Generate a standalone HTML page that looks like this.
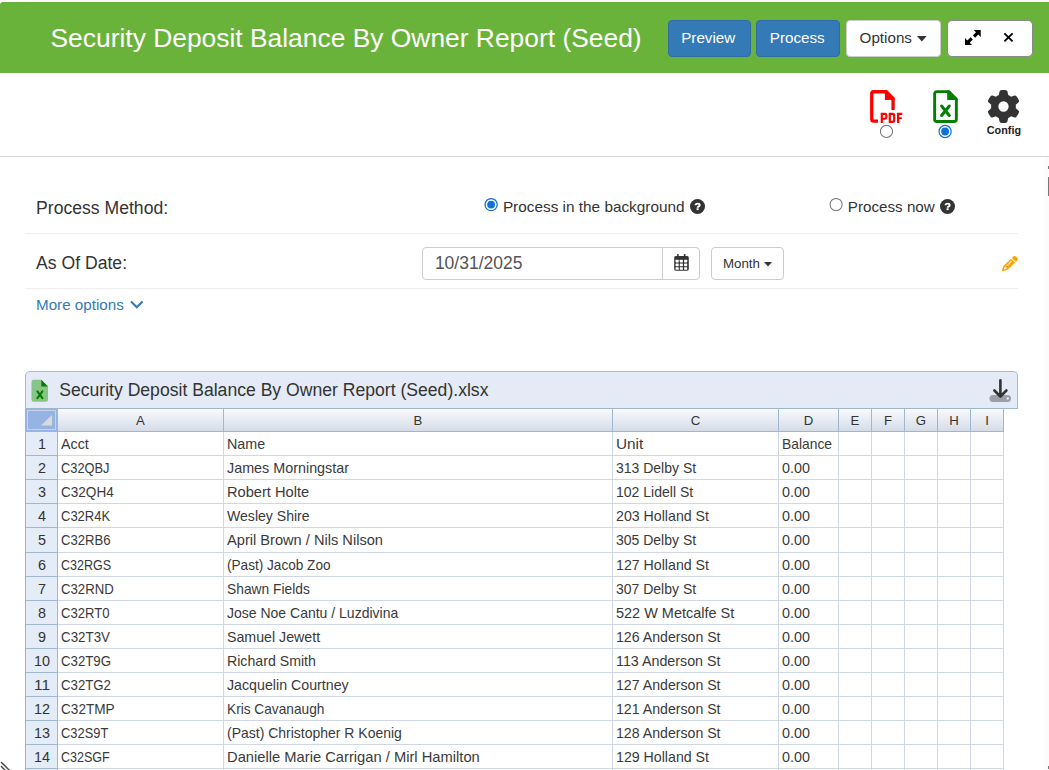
<!DOCTYPE html>
<html><head><meta charset="utf-8">
<style>
html,body{margin:0;padding:0;}
body{width:1049px;height:770px;overflow:hidden;position:relative;background:#fff;font-family:"Liberation Sans", sans-serif;}
.t{position:absolute;white-space:nowrap;line-height:1;}
svg{position:absolute;overflow:visible;}
</style></head><body>
<div style="position:absolute;left:0px;top:2px;width:1049px;height:71px;background:#6ab33b;border-top-left-radius:3px;"></div>
<div class="t" style="left:50.5px;top:24.85px;font-size:26.4px;color:#fff;font-weight:normal;">Security Deposit Balance By Owner Report (Seed)</div>
<div style="position:absolute;left:668px;top:20px;width:81px;height:35px;background:#337ab7;border:1px solid #2e6da4;border-radius:4px;"></div>
<div class="t" style="left:681.2px;top:30.43px;font-size:15.2px;color:#fff;font-weight:normal;">Preview</div>
<div style="position:absolute;left:756px;top:20px;width:82px;height:35px;background:#337ab7;border:1px solid #2e6da4;border-radius:4px;"></div>
<div class="t" style="left:769.8px;top:30.43px;font-size:15.2px;color:#fff;font-weight:normal;">Process</div>
<div style="position:absolute;left:846px;top:20px;width:93px;height:35px;background:#fff;border:1px solid #ccc;border-radius:4px;"></div>
<div class="t" style="left:859.6px;top:30.43px;font-size:15.2px;color:#333;font-weight:normal;">Options</div>
<svg style="left:917.3px;top:35.5px" width="10" height="6"><path d="M0 0H9.6L4.8 5.4Z" fill="#333"/></svg>
<div style="position:absolute;left:947px;top:20px;width:84px;height:35px;background:#fff;border:1px solid #8a8a8a;border-radius:5px;"></div>
<svg style="left:0;top:0" width="1049" height="770" viewBox="0 0 1049 770">
<path d="M973.6 29.9H980.7V37L978.3 34.6L975.2 37.7L972.9 35.4L976 32.3Z" fill="#000"/>
<path d="M972.1 45.1H965V38L967.4 40.4L970.5 37.3L972.8 39.6L969.7 42.7Z" fill="#000"/>
<path d="M1004.4 33.4L1012.6 41.4M1012.6 33.4L1004.4 41.4" stroke="#000" stroke-width="1.9"/>
</svg>
<div style="position:absolute;left:0px;top:156px;width:1049px;height:1px;background:#d4d4d4;"></div>
<svg style="left:0;top:0" width="1049" height="770" viewBox="0 0 1049 770">
<path d="M878 121.15H873.7Q871.75 121.15 871.75 119.2V93.7Q871.75 91.75 873.7 91.75H886.3L893.05 98.5V109.9" fill="none" stroke="#f00" stroke-width="3.3"/>
<path d="M884.9 90.1H886.5L894.7 98.3V99.9H884.9Z" fill="#f00"/>
<path fill-rule="evenodd" fill="#f00" d="M880.7 112.7H885Q887.4 112.7 887.4 115.1V117.3Q887.4 119.7 885 119.7H882.9V122.9H880.7ZM882.9 114.9H884.6Q885.3 114.9 885.3 115.6V117Q885.3 117.7 884.6 117.7H882.9Z
M888.7 112.7H892.7Q895.2 112.7 895.2 115.2V120.4Q895.2 122.9 892.7 122.9H888.7ZM890.9 114.9H892.4Q893.1 114.9 893.1 115.6V120Q893.1 120.7 892.4 120.7H890.9Z
M897 112.7H902.3V114.9H899.3V117.2H901.9V119.1H899.3V122.9H897Z"/>
</svg>
<svg style="left:0;top:0" width="1049" height="770" viewBox="0 0 1049 770"><circle cx="886.5" cy="131.4" r="6.05" fill="#fff" stroke="#767676" stroke-width="1.05"/></svg>
<svg style="left:0;top:0" width="1049" height="770" viewBox="0 0 1049 770">
<path d="M948.6 91.6H937Q934.65 91.6 934.65 93.95V119.2Q934.65 121.55 937 121.55H954Q956.35 121.55 956.35 119.2V99.4Z" fill="none" stroke="#008000" stroke-width="2.9" stroke-linejoin="round"/>
<path d="M947.2 90.2H949.2L957.8 98.8V100H947.2Z" fill="#008000"/>
<path d="M941.6 106L949.3 115.5M949.3 106L941.6 115.5" stroke="#008000" stroke-width="3" stroke-linecap="round"/>
</svg>
<svg style="left:0;top:0" width="1049" height="770" viewBox="0 0 1049 770"><circle cx="945.1" cy="131.5" r="6.1" fill="#fff" stroke="#0f70d7" stroke-width="1.25"/><circle cx="945.1" cy="131.5" r="3.9" fill="#0f70d7"/></svg>
<svg style="left:987px;top:90px" width="33" height="33" viewBox="0 0 512 512">
<path fill="#333" d="M495.9 166.6c3.2 8.7 .5 18.4-6.4 24.6l-43.3 39.4c1.1 8.3 1.7 16.8 1.7 25.4s-.6 17.1-1.7 25.4l43.3 39.4c6.9 6.2 9.6 15.9 6.4 24.6c-4.4 11.9-9.7 23.3-15.8 34.3l-4.7 8.1c-6.6 11-14 21.4-22.1 31.2c-5.900 7.2-15.7 9.6-24.5 6.8l-55.7-17.700c-13.4 10.3-28.2 18.9-44 25.4l-12.5 57.1c-2 9.1-9 16.3-18.2 17.8c-13.8 2.3-28 3.5-42.5 3.5s-28.7-1.2-42.5-3.5c-9.2-1.5-16.2-8.7-18.2-17.8l-12.5-57.1c-15.8-6.5-30.6-15.1-44-25.4L83.1 425.9c-8.8 2.8-18.6 .3-24.5-6.8c-8.1-9.8-15.5-20.2-22.1-31.2l-4.7-8.1c-6.1-11-11.4-22.4-15.8-34.3c-3.2-8.7-.5-18.4 6.4-24.6l43.3-39.4C64.6 273.1 64 264.6 64 256s.6-17.1 1.7-25.4L22.4 191.200c-6.9-6.2-9.6-15.900-6.4-24.6c4.4-11.9 9.7-23.3 15.8-34.3l4.7-8.1c6.6-11 14-21.4 22.1-31.2c5.9-7.2 15.7-9.6 24.5-6.8l55.7 17.7c13.4-10.3 28.2-18.9 44-25.4l12.5-57.1c2-9.1 9-16.3 18.2-17.8C227.3 1.2 241.5 0 256 0s28.7 1.2 42.5 3.5c9.2 1.5 16.2 8.7 18.2 17.8l12.5 57.1c15.8 6.5 30.6 15.1 44 25.4l55.7-17.7c8.8-2.8 18.6-.3 24.5 6.8c8.1 9.8 15.5 20.2 22.1 31.2l4.7 8.1c6.1 11 11.4 22.4 15.8 34.3zM256 336a80 80 0 1 0 0-160 80 80 0 1 0 0 160z"/>
</svg>
<div class="t" style="left:986.8px;top:125.06px;font-size:10.8px;color:#222;font-weight:bold;">Config</div>
<div style="position:absolute;left:1045px;top:157px;width:4px;height:613px;background:#fbfbfb;"></div>
<div style="position:absolute;left:1048px;top:766px;width:1px;height:3px;background:#777;"></div>
<div style="position:absolute;left:1048px;top:166px;width:1px;height:3px;background:#777;"></div>
<div style="position:absolute;left:1048px;top:177px;width:1px;height:19px;background:#777;"></div>
<div class="t" style="left:36.1px;top:199.50px;font-size:17.6px;color:#333;font-weight:normal;">Process Method:</div>
<svg style="left:0;top:0" width="1049" height="770" viewBox="0 0 1049 770"><circle cx="491.1" cy="204.6" r="6.1" fill="#fff" stroke="#0f70d7" stroke-width="1.25"/><circle cx="491.1" cy="204.6" r="3.9" fill="#0f70d7"/></svg>
<div class="t" style="left:502.9px;top:198.61px;font-size:15.35px;color:#333;font-weight:normal;">Process in the background</div>
<svg style="left:689.5px;top:198.8px" width="15" height="15" viewBox="0 0 15 15"><circle cx="7.5" cy="7.5" r="7.5" fill="#333"/><path d="M5.5 6.2Q5.5 4.6 7.6 4.6Q9.7 4.6 9.7 6.1Q9.7 7.1 8.6 7.6Q7.6 8.05 7.6 8.7" fill="none" stroke="#fff" stroke-width="1.9"/><rect x="6.55" y="9.3" width="2.1" height="1.8" fill="#fff"/></svg>
<svg style="left:0;top:0" width="1049" height="770" viewBox="0 0 1049 770"><circle cx="836.1" cy="204.5" r="6.05" fill="#fff" stroke="#767676" stroke-width="1.05"/></svg>
<div class="t" style="left:847.8px;top:198.73px;font-size:15.2px;color:#333;font-weight:normal;">Process now</div>
<svg style="left:940.2px;top:198.6px" width="15" height="15" viewBox="0 0 15 15"><circle cx="7.5" cy="7.5" r="7.5" fill="#333"/><path d="M5.5 6.2Q5.5 4.6 7.6 4.6Q9.7 4.6 9.7 6.1Q9.7 7.1 8.6 7.6Q7.6 8.05 7.6 8.7" fill="none" stroke="#fff" stroke-width="1.9"/><rect x="6.55" y="9.3" width="2.1" height="1.8" fill="#fff"/></svg>
<div style="position:absolute;left:25px;top:233px;width:993px;height:1px;background:#eee;"></div>
<div class="t" style="left:36.1px;top:254.90px;font-size:17.6px;color:#333;font-weight:normal;">As Of Date:</div>
<div style="position:absolute;left:422px;top:247px;width:276px;height:31px;border:1px solid #ccc;border-radius:4px;background:#fff;"></div>
<div style="position:absolute;left:662px;top:248px;width:1px;height:31px;background:#ccc;"></div>
<div class="t" style="left:434.9px;top:254.59px;font-size:17.5px;color:#555;font-weight:normal;">10/31/2025</div>
<svg style="left:674px;top:254px" width="15" height="17" viewBox="0 0 15 17">
<rect x="3.1" y="0" width="1.6" height="3.2" rx=".5" fill="#333"/><rect x="9.9" y="0" width="1.6" height="3.2" rx=".5" fill="#333"/>
<rect x="0.2" y="2.1" width="14.6" height="14.6" rx="1.6" fill="#333"/>
<g fill="#fff"><rect x="1.6" y="5.8" width="3.1" height="2.7" rx=".4"/><rect x="5.8" y="5.8" width="3.1" height="2.7" rx=".4"/><rect x="10.1" y="5.8" width="3.1" height="2.7" rx=".4"/>
<rect x="1.6" y="9.6" width="3.1" height="2.6" rx=".4"/><rect x="5.8" y="9.6" width="3.1" height="2.6" rx=".4"/><rect x="10.1" y="9.6" width="3.1" height="2.6" rx=".4"/>
<rect x="1.6" y="13.2" width="3.1" height="2.6" rx=".4"/><rect x="5.8" y="13.2" width="3.1" height="2.6" rx=".4"/><rect x="10.1" y="13.2" width="3.1" height="2.6" rx=".4"/></g>
</svg>
<div style="position:absolute;left:711px;top:247px;width:71px;height:31px;border:1px solid #ccc;border-radius:4px;background:#fff;"></div>
<div class="t" style="left:723px;top:256.74px;font-size:13.3px;color:#333;font-weight:normal;">Month</div>
<svg style="left:764px;top:262px" width="8" height="5"><path d="M0 0H8L4 4.5Z" fill="#333"/></svg>
<svg style="left:1002.2px;top:255.7px" width="15.9" height="15.2" viewBox="0 0 512 512" preserveAspectRatio="none">
<path fill="#ffa500" d="M410.3 231l11.3-11.3-33.9-33.9-62.1-62.1L291.7 89.8l-11.3 11.3-22.6 22.6L58.6 322.9c-10.4 10.4-18 23.3-22.2 37.4L1 480.7c-2.5 8.4-.2 17.5 6.1 23.7s15.3 8.5 23.7 6.1l120.3-35.4c14.1-4.2 27-11.8 37.4-22.2L387.7 253.7 410.3 231zM160 399.4l-9.1 22.7c-4 3.1-8.5 5.4-13.300 6.9L59.4 452l23-78.1c1.4-4.9 3.8-9.4 6.9-13.3l22.7-9.1v32c0 8.8 7.2 16 16 16h32zM362.7 18.7L348.3 33.2 325.7 55.8 314.3 67.1l33.9 33.9 62.1 62.1 33.9 33.9 11.3-11.3 22.6-22.6 14.5-14.5c25-25 25-65.5 0-90.5L453.3 18.7c-25-25-65.5-25-90.5 0zm-47.4 168l-144 144c-6.2 6.2-16.4 6.2-22.6 0s-6.2-16.4 0-22.6l144-144c6.2-6.2 16.4-6.2 22.6 0s6.2 16.4 0 22.6z"/>
</svg>
<div style="position:absolute;left:25px;top:288px;width:993px;height:1px;background:#eee;"></div>
<div class="t" style="left:36px;top:296.93px;font-size:15.2px;color:#337ab7;font-weight:normal;">More options</div>
<svg style="left:129px;top:299px" width="16" height="10" viewBox="0 0 16 10"><path d="M2 2.6L7.8 8.2L13.6 2.6" fill="none" stroke="#337ab7" stroke-width="2.1"/></svg>
<div style="position:absolute;left:25px;top:371px;width:991px;height:37px;background:#e4ebf6;border:1px solid #a3bcd8;border-bottom:none;border-radius:5px 5px 0 0;"></div>
<svg style="left:0;top:0" width="1049" height="770" viewBox="0 0 1049 770">
<path d="M33.6 379.8H41.3L48 386.5V399.7Q48 401.8 45.9 401.8H33.6Q31.5 401.8 31.5 399.7V381.9Q31.5 379.8 33.6 379.8Z" fill="#88c488"/>
<path d="M41.3 379.8L48 386.5H41.3Z" fill="#008000"/>
<path d="M37.4 391.4L42.4 398.1M42.4 391.4L37.4 398.1" stroke="#008000" stroke-width="2.1" stroke-linecap="round"/>
</svg>
<div class="t" style="left:59.2px;top:382.00px;font-size:17.6px;color:#333;font-weight:normal;">Security Deposit Balance By Owner Report (Seed).xlsx</div>
<svg style="left:988px;top:379px" width="25" height="25" viewBox="0 0 25 25">
<rect x="1.5" y="16" width="21.5" height="7" rx="3.5" fill="#9a9fa8"/>
<circle cx="19.7" cy="19.5" r="1.1" fill="#fff"/>
<path d="M12.4 1.2V17M6.4 11.5L12.4 17.5L18.4 11.5" fill="none" stroke="#333" stroke-width="2.6" stroke-linecap="round" stroke-linejoin="round"/>
</svg>
<div style="position:absolute;left:25px;top:408px;width:978px;height:23px;background:linear-gradient(#fafbfd,#d5dce8);"></div>
<div style="position:absolute;left:25px;top:431px;width:32px;height:339px;background:#e4ecf7;"></div>
<div style="position:absolute;left:26px;top:409px;width:31px;height:22px;background:#95b3e3;"></div>
<div style="position:absolute;left:27px;top:410px;width:29px;height:20px;box-sizing:border-box;border:1px solid #c5d5ef;"></div>
<svg style="left:41px;top:415px" width="12" height="11"><path d="M11 0V10.5H0Z" fill="#d9dadf"/></svg>
<div style="position:absolute;left:57px;top:455px;width:946px;height:1px;background:#d0d7e5;"></div>
<div style="position:absolute;left:25px;top:455px;width:32px;height:1px;background:#9eb6ce;"></div>
<div style="position:absolute;left:57px;top:479px;width:946px;height:1px;background:#d0d7e5;"></div>
<div style="position:absolute;left:25px;top:479px;width:32px;height:1px;background:#9eb6ce;"></div>
<div style="position:absolute;left:57px;top:503px;width:946px;height:1px;background:#d0d7e5;"></div>
<div style="position:absolute;left:25px;top:503px;width:32px;height:1px;background:#9eb6ce;"></div>
<div style="position:absolute;left:57px;top:527px;width:946px;height:1px;background:#d0d7e5;"></div>
<div style="position:absolute;left:25px;top:527px;width:32px;height:1px;background:#9eb6ce;"></div>
<div style="position:absolute;left:57px;top:552px;width:946px;height:1px;background:#d0d7e5;"></div>
<div style="position:absolute;left:25px;top:552px;width:32px;height:1px;background:#9eb6ce;"></div>
<div style="position:absolute;left:57px;top:576px;width:946px;height:1px;background:#d0d7e5;"></div>
<div style="position:absolute;left:25px;top:576px;width:32px;height:1px;background:#9eb6ce;"></div>
<div style="position:absolute;left:57px;top:600px;width:946px;height:1px;background:#d0d7e5;"></div>
<div style="position:absolute;left:25px;top:600px;width:32px;height:1px;background:#9eb6ce;"></div>
<div style="position:absolute;left:57px;top:624px;width:946px;height:1px;background:#d0d7e5;"></div>
<div style="position:absolute;left:25px;top:624px;width:32px;height:1px;background:#9eb6ce;"></div>
<div style="position:absolute;left:57px;top:648px;width:946px;height:1px;background:#d0d7e5;"></div>
<div style="position:absolute;left:25px;top:648px;width:32px;height:1px;background:#9eb6ce;"></div>
<div style="position:absolute;left:57px;top:672px;width:946px;height:1px;background:#d0d7e5;"></div>
<div style="position:absolute;left:25px;top:672px;width:32px;height:1px;background:#9eb6ce;"></div>
<div style="position:absolute;left:57px;top:696px;width:946px;height:1px;background:#d0d7e5;"></div>
<div style="position:absolute;left:25px;top:696px;width:32px;height:1px;background:#9eb6ce;"></div>
<div style="position:absolute;left:57px;top:720px;width:946px;height:1px;background:#d0d7e5;"></div>
<div style="position:absolute;left:25px;top:720px;width:32px;height:1px;background:#9eb6ce;"></div>
<div style="position:absolute;left:57px;top:744px;width:946px;height:1px;background:#d0d7e5;"></div>
<div style="position:absolute;left:25px;top:744px;width:32px;height:1px;background:#9eb6ce;"></div>
<div style="position:absolute;left:57px;top:768px;width:946px;height:1px;background:#d0d7e5;"></div>
<div style="position:absolute;left:25px;top:768px;width:32px;height:1px;background:#9eb6ce;"></div>
<div style="position:absolute;left:223px;top:431px;width:1px;height:339px;background:#d0d7e5;"></div>
<div style="position:absolute;left:612px;top:431px;width:1px;height:339px;background:#d0d7e5;"></div>
<div style="position:absolute;left:778px;top:431px;width:1px;height:339px;background:#d0d7e5;"></div>
<div style="position:absolute;left:838px;top:431px;width:1px;height:339px;background:#d0d7e5;"></div>
<div style="position:absolute;left:871px;top:431px;width:1px;height:339px;background:#d0d7e5;"></div>
<div style="position:absolute;left:904px;top:431px;width:1px;height:339px;background:#d0d7e5;"></div>
<div style="position:absolute;left:937px;top:431px;width:1px;height:339px;background:#d0d7e5;"></div>
<div style="position:absolute;left:970px;top:431px;width:1px;height:339px;background:#d0d7e5;"></div>
<div style="position:absolute;left:1003px;top:431px;width:1px;height:339px;background:#d0d7e5;"></div>
<div style="position:absolute;left:25px;top:408px;width:1px;height:362px;background:#9eb6ce;"></div>
<div style="position:absolute;left:57px;top:408px;width:1px;height:362px;background:#9eb6ce;"></div>
<div style="position:absolute;left:25px;top:408px;width:993px;height:1px;background:#9eb6ce;"></div>
<div style="position:absolute;left:25px;top:431px;width:979px;height:1px;background:#9eb6ce;"></div>
<div style="position:absolute;left:223px;top:408px;width:1px;height:23px;background:#9eb6ce;"></div>
<div style="position:absolute;left:612px;top:408px;width:1px;height:23px;background:#9eb6ce;"></div>
<div style="position:absolute;left:778px;top:408px;width:1px;height:23px;background:#9eb6ce;"></div>
<div style="position:absolute;left:838px;top:408px;width:1px;height:23px;background:#9eb6ce;"></div>
<div style="position:absolute;left:871px;top:408px;width:1px;height:23px;background:#9eb6ce;"></div>
<div style="position:absolute;left:904px;top:408px;width:1px;height:23px;background:#9eb6ce;"></div>
<div style="position:absolute;left:937px;top:408px;width:1px;height:23px;background:#9eb6ce;"></div>
<div style="position:absolute;left:970px;top:408px;width:1px;height:23px;background:#9eb6ce;"></div>
<div style="position:absolute;left:1003px;top:408px;width:1px;height:23px;background:#9eb6ce;"></div>
<div class="t" style="left:110.5px;width:60px;text-align:center;top:414.03px;font-size:13.2px;color:#333;font-weight:normal;">A</div>
<div class="t" style="left:388.0px;width:60px;text-align:center;top:414.03px;font-size:13.2px;color:#333;font-weight:normal;">B</div>
<div class="t" style="left:665.5px;width:60px;text-align:center;top:414.03px;font-size:13.2px;color:#333;font-weight:normal;">C</div>
<div class="t" style="left:778.5px;width:60px;text-align:center;top:414.03px;font-size:13.2px;color:#333;font-weight:normal;">D</div>
<div class="t" style="left:825.0px;width:60px;text-align:center;top:414.03px;font-size:13.2px;color:#333;font-weight:normal;">E</div>
<div class="t" style="left:858.0px;width:60px;text-align:center;top:414.03px;font-size:13.2px;color:#333;font-weight:normal;">F</div>
<div class="t" style="left:891.0px;width:60px;text-align:center;top:414.03px;font-size:13.2px;color:#333;font-weight:normal;">G</div>
<div class="t" style="left:924.0px;width:60px;text-align:center;top:414.03px;font-size:13.2px;color:#333;font-weight:normal;">H</div>
<div class="t" style="left:957.0px;width:60px;text-align:center;top:414.03px;font-size:13.2px;color:#333;font-weight:normal;">I</div>
<div class="t" style="left:37.507375px;top:436.61px;font-size:14.4px;color:#333;font-weight:normal;transform:scaleX(0.9977);transform-origin:0 0;">1</div>
<div class="t" style="left:61.0px;top:436.61px;font-size:14.4px;color:#3a3a3a;font-weight:normal;transform:scaleX(0.9905);transform-origin:0 0;">Acct</div>
<div class="t" style="left:227.0px;top:436.61px;font-size:14.4px;color:#3a3a3a;font-weight:normal;transform:scaleX(0.9937);transform-origin:0 0;">Name</div>
<div class="t" style="left:616.0px;top:436.61px;font-size:14.4px;color:#3a3a3a;font-weight:normal;transform:scaleX(1.0653);transform-origin:0 0;">Unit</div>
<div class="t" style="left:782.0px;top:436.61px;font-size:14.4px;color:#3a3a3a;font-weight:normal;transform:scaleX(0.9622);transform-origin:0 0;">Balance</div>
<div class="t" style="left:37.507375px;top:460.61px;font-size:14.4px;color:#333;font-weight:normal;transform:scaleX(0.9977);transform-origin:0 0;">2</div>
<div class="t" style="left:61.0px;top:460.61px;font-size:14.4px;color:#3a3a3a;font-weight:normal;transform:scaleX(0.8925);transform-origin:0 0;">C32QBJ</div>
<div class="t" style="left:227.0px;top:460.61px;font-size:14.4px;color:#3a3a3a;font-weight:normal;transform:scaleX(0.9972);transform-origin:0 0;">James Morningstar</div>
<div class="t" style="left:616.0px;top:460.61px;font-size:14.4px;color:#3a3a3a;font-weight:normal;transform:scaleX(0.9724);transform-origin:0 0;">313 Delby St</div>
<div class="t" style="left:782.0px;top:460.61px;font-size:14.4px;color:#3a3a3a;font-weight:normal;transform:scaleX(0.9970);transform-origin:0 0;">0.00</div>
<div class="t" style="left:37.507375px;top:484.61px;font-size:14.4px;color:#333;font-weight:normal;transform:scaleX(0.9977);transform-origin:0 0;">3</div>
<div class="t" style="left:61.0px;top:484.61px;font-size:14.4px;color:#3a3a3a;font-weight:normal;transform:scaleX(0.9421);transform-origin:0 0;">C32QH4</div>
<div class="t" style="left:227.0px;top:484.61px;font-size:14.4px;color:#3a3a3a;font-weight:normal;transform:scaleX(1.0167);transform-origin:0 0;">Robert Holte</div>
<div class="t" style="left:616.0px;top:484.61px;font-size:14.4px;color:#3a3a3a;font-weight:normal;transform:scaleX(0.9738);transform-origin:0 0;">102 Lidell St</div>
<div class="t" style="left:782.0px;top:484.61px;font-size:14.4px;color:#3a3a3a;font-weight:normal;transform:scaleX(0.9970);transform-origin:0 0;">0.00</div>
<div class="t" style="left:37.507375px;top:508.61px;font-size:14.4px;color:#333;font-weight:normal;transform:scaleX(0.9977);transform-origin:0 0;">4</div>
<div class="t" style="left:61.0px;top:508.61px;font-size:14.4px;color:#3a3a3a;font-weight:normal;transform:scaleX(0.9025);transform-origin:0 0;">C32R4K</div>
<div class="t" style="left:227.0px;top:508.61px;font-size:14.4px;color:#3a3a3a;font-weight:normal;transform:scaleX(0.9775);transform-origin:0 0;">Wesley Shire</div>
<div class="t" style="left:616.0px;top:508.61px;font-size:14.4px;color:#3a3a3a;font-weight:normal;transform:scaleX(0.9850);transform-origin:0 0;">203 Holland St</div>
<div class="t" style="left:782.0px;top:508.61px;font-size:14.4px;color:#3a3a3a;font-weight:normal;transform:scaleX(0.9970);transform-origin:0 0;">0.00</div>
<div class="t" style="left:37.507375px;top:532.61px;font-size:14.4px;color:#333;font-weight:normal;transform:scaleX(0.9977);transform-origin:0 0;">5</div>
<div class="t" style="left:61.0px;top:532.61px;font-size:14.4px;color:#3a3a3a;font-weight:normal;transform:scaleX(0.9095);transform-origin:0 0;">C32RB6</div>
<div class="t" style="left:227.0px;top:532.61px;font-size:14.4px;color:#3a3a3a;font-weight:normal;transform:scaleX(1.0158);transform-origin:0 0;">April Brown / Nils Nilson</div>
<div class="t" style="left:616.0px;top:532.61px;font-size:14.4px;color:#3a3a3a;font-weight:normal;transform:scaleX(0.9724);transform-origin:0 0;">305 Delby St</div>
<div class="t" style="left:782.0px;top:532.61px;font-size:14.4px;color:#3a3a3a;font-weight:normal;transform:scaleX(0.9970);transform-origin:0 0;">0.00</div>
<div class="t" style="left:37.507375px;top:557.61px;font-size:14.4px;color:#333;font-weight:normal;transform:scaleX(0.9977);transform-origin:0 0;">6</div>
<div class="t" style="left:61.0px;top:557.61px;font-size:14.4px;color:#3a3a3a;font-weight:normal;transform:scaleX(0.8698);transform-origin:0 0;">C32RGS</div>
<div class="t" style="left:227.0px;top:557.61px;font-size:14.4px;color:#3a3a3a;font-weight:normal;transform:scaleX(0.9451);transform-origin:0 0;">(Past) Jacob Zoo</div>
<div class="t" style="left:616.0px;top:557.61px;font-size:14.4px;color:#3a3a3a;font-weight:normal;transform:scaleX(0.9850);transform-origin:0 0;">127 Holland St</div>
<div class="t" style="left:782.0px;top:557.61px;font-size:14.4px;color:#3a3a3a;font-weight:normal;transform:scaleX(0.9970);transform-origin:0 0;">0.00</div>
<div class="t" style="left:37.507375px;top:581.61px;font-size:14.4px;color:#333;font-weight:normal;transform:scaleX(0.9977);transform-origin:0 0;">7</div>
<div class="t" style="left:61.0px;top:581.61px;font-size:14.4px;color:#3a3a3a;font-weight:normal;transform:scaleX(0.9167);transform-origin:0 0;">C32RND</div>
<div class="t" style="left:227.0px;top:581.61px;font-size:14.4px;color:#3a3a3a;font-weight:normal;transform:scaleX(0.9590);transform-origin:0 0;">Shawn Fields</div>
<div class="t" style="left:616.0px;top:581.61px;font-size:14.4px;color:#3a3a3a;font-weight:normal;transform:scaleX(0.9724);transform-origin:0 0;">307 Delby St</div>
<div class="t" style="left:782.0px;top:581.61px;font-size:14.4px;color:#3a3a3a;font-weight:normal;transform:scaleX(0.9970);transform-origin:0 0;">0.00</div>
<div class="t" style="left:37.507375px;top:605.61px;font-size:14.4px;color:#333;font-weight:normal;transform:scaleX(0.9977);transform-origin:0 0;">8</div>
<div class="t" style="left:61.0px;top:605.61px;font-size:14.4px;color:#3a3a3a;font-weight:normal;transform:scaleX(0.9109);transform-origin:0 0;">C32RT0</div>
<div class="t" style="left:227.0px;top:605.61px;font-size:14.4px;color:#3a3a3a;font-weight:normal;transform:scaleX(0.9730);transform-origin:0 0;">Jose Noe Cantu / Luzdivina</div>
<div class="t" style="left:616.0px;top:605.61px;font-size:14.4px;color:#3a3a3a;font-weight:normal;transform:scaleX(1.0054);transform-origin:0 0;">522 W Metcalfe St</div>
<div class="t" style="left:782.0px;top:605.61px;font-size:14.4px;color:#3a3a3a;font-weight:normal;transform:scaleX(0.9970);transform-origin:0 0;">0.00</div>
<div class="t" style="left:37.507375px;top:629.61px;font-size:14.4px;color:#333;font-weight:normal;transform:scaleX(0.9977);transform-origin:0 0;">9</div>
<div class="t" style="left:61.0px;top:629.61px;font-size:14.4px;color:#3a3a3a;font-weight:normal;transform:scaleX(0.9273);transform-origin:0 0;">C32T3V</div>
<div class="t" style="left:227.0px;top:629.61px;font-size:14.4px;color:#3a3a3a;font-weight:normal;transform:scaleX(0.9871);transform-origin:0 0;">Samuel Jewett</div>
<div class="t" style="left:616.0px;top:629.61px;font-size:14.4px;color:#3a3a3a;font-weight:normal;transform:scaleX(0.9823);transform-origin:0 0;">126 Anderson St</div>
<div class="t" style="left:782.0px;top:629.61px;font-size:14.4px;color:#3a3a3a;font-weight:normal;transform:scaleX(0.9970);transform-origin:0 0;">0.00</div>
<div class="t" style="left:33.51475px;top:653.61px;font-size:14.4px;color:#333;font-weight:normal;transform:scaleX(0.9977);transform-origin:0 0;">10</div>
<div class="t" style="left:61.0px;top:653.61px;font-size:14.4px;color:#3a3a3a;font-weight:normal;transform:scaleX(0.9186);transform-origin:0 0;">C32T9G</div>
<div class="t" style="left:227.0px;top:653.61px;font-size:14.4px;color:#3a3a3a;font-weight:normal;transform:scaleX(0.9840);transform-origin:0 0;">Richard Smith</div>
<div class="t" style="left:616.0px;top:653.61px;font-size:14.4px;color:#3a3a3a;font-weight:normal;transform:scaleX(0.9922);transform-origin:0 0;">113 Anderson St</div>
<div class="t" style="left:782.0px;top:653.61px;font-size:14.4px;color:#3a3a3a;font-weight:normal;transform:scaleX(0.9970);transform-origin:0 0;">0.00</div>
<div class="t" style="left:33.51475px;top:677.61px;font-size:14.4px;color:#333;font-weight:normal;transform:scaleX(1.0691);transform-origin:0 0;">11</div>
<div class="t" style="left:61.0px;top:677.61px;font-size:14.4px;color:#3a3a3a;font-weight:normal;transform:scaleX(0.9186);transform-origin:0 0;">C32TG2</div>
<div class="t" style="left:227.0px;top:677.61px;font-size:14.4px;color:#3a3a3a;font-weight:normal;transform:scaleX(0.9874);transform-origin:0 0;">Jacquelin Courtney</div>
<div class="t" style="left:616.0px;top:677.61px;font-size:14.4px;color:#3a3a3a;font-weight:normal;transform:scaleX(0.9823);transform-origin:0 0;">127 Anderson St</div>
<div class="t" style="left:782.0px;top:677.61px;font-size:14.4px;color:#3a3a3a;font-weight:normal;transform:scaleX(0.9970);transform-origin:0 0;">0.00</div>
<div class="t" style="left:33.51475px;top:701.61px;font-size:14.4px;color:#333;font-weight:normal;transform:scaleX(0.9977);transform-origin:0 0;">12</div>
<div class="t" style="left:61.0px;top:701.61px;font-size:14.4px;color:#3a3a3a;font-weight:normal;transform:scaleX(0.9449);transform-origin:0 0;">C32TMP</div>
<div class="t" style="left:227.0px;top:701.61px;font-size:14.4px;color:#3a3a3a;font-weight:normal;transform:scaleX(0.9511);transform-origin:0 0;">Kris Cavanaugh</div>
<div class="t" style="left:616.0px;top:701.61px;font-size:14.4px;color:#3a3a3a;font-weight:normal;transform:scaleX(0.9823);transform-origin:0 0;">121 Anderson St</div>
<div class="t" style="left:782.0px;top:701.61px;font-size:14.4px;color:#3a3a3a;font-weight:normal;transform:scaleX(0.9970);transform-origin:0 0;">0.00</div>
<div class="t" style="left:33.51475px;top:725.61px;font-size:14.4px;color:#333;font-weight:normal;transform:scaleX(0.9977);transform-origin:0 0;">13</div>
<div class="t" style="left:61.0px;top:725.61px;font-size:14.4px;color:#3a3a3a;font-weight:normal;transform:scaleX(0.8950);transform-origin:0 0;">C32S9T</div>
<div class="t" style="left:227.0px;top:725.61px;font-size:14.4px;color:#3a3a3a;font-weight:normal;transform:scaleX(0.9719);transform-origin:0 0;">(Past) Christopher R Koenig</div>
<div class="t" style="left:616.0px;top:725.61px;font-size:14.4px;color:#3a3a3a;font-weight:normal;transform:scaleX(0.9823);transform-origin:0 0;">128 Anderson St</div>
<div class="t" style="left:782.0px;top:725.61px;font-size:14.4px;color:#3a3a3a;font-weight:normal;transform:scaleX(0.9970);transform-origin:0 0;">0.00</div>
<div class="t" style="left:33.51475px;top:749.61px;font-size:14.4px;color:#333;font-weight:normal;transform:scaleX(0.9977);transform-origin:0 0;">14</div>
<div class="t" style="left:61.0px;top:749.61px;font-size:14.4px;color:#3a3a3a;font-weight:normal;transform:scaleX(0.8710);transform-origin:0 0;">C32SGF</div>
<div class="t" style="left:227.0px;top:749.61px;font-size:14.4px;color:#3a3a3a;font-weight:normal;transform:scaleX(1.0230);transform-origin:0 0;">Danielle Marie Carrigan / Mirl Hamilton</div>
<div class="t" style="left:616.0px;top:749.61px;font-size:14.4px;color:#3a3a3a;font-weight:normal;transform:scaleX(0.9850);transform-origin:0 0;">129 Holland St</div>
<div class="t" style="left:782.0px;top:749.61px;font-size:14.4px;color:#3a3a3a;font-weight:normal;transform:scaleX(0.9970);transform-origin:0 0;">0.00</div>
<svg style="left:0;top:0" width="1049" height="770" viewBox="0 0 1049 770"><path d="M1.5 762.4L9.5 770.4M1.4 766.6L5.2 770.4" stroke="#444" stroke-width="1.4" stroke-linecap="round"/></svg>
</body></html>
